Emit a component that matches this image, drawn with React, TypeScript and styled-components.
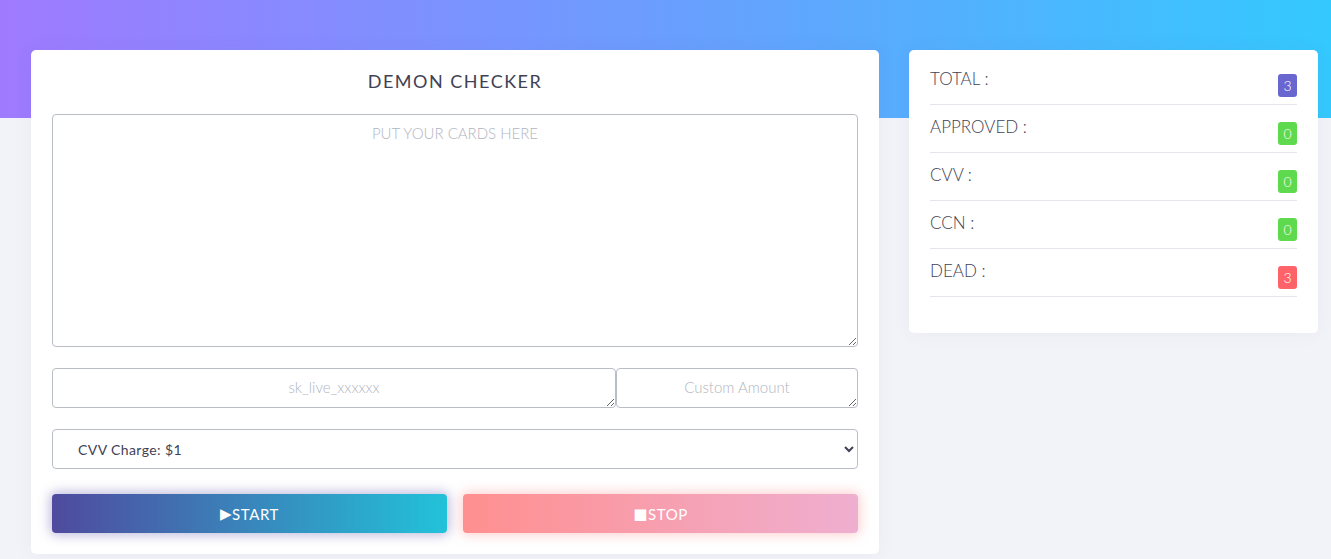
import React from "react";
import styled, { createGlobalStyle } from "styled-components";

const Global = createGlobalStyle`
  html, body { margin: 0; padding: 0; }
  body {
    font-family: "Lato", "Noto Sans", "Liberation Sans", sans-serif;
    background: #f2f3f8;
    color: #3f4254;
  }
  * { box-sizing: border-box; }
`;

const Page = styled.div`
  min-height: 559px;
  background:
    linear-gradient(to right, #9f7aff 0%, #6a9efe 50%, #34c9fe 100%) no-repeat top left / 100% 118px,
    #f2f3f8;
  padding: 50px 13px 0 31px;
`;

const Layout = styled.div`
  display: grid;
  grid-template-columns: 848px 409px;
  column-gap: 30px;
  align-items: start;
`;

const Card = styled.div`
  background: #ffffff;
  border-radius: 5px;
  box-shadow: 0 0 20px rgba(82, 63, 105, 0.05);
`;

const CheckerCard = styled(Card)`
  padding: 19px 21px 21px;
  display: flex;
  flex-direction: column;
`;

const Title = styled.h1`
  margin: 0 0 21px;
  text-align: center;
  font-size: 18px;
  line-height: 24px;
  font-weight: 400;
  letter-spacing: 1.5px;
  color: #3f4254;
`;

const Field = styled.textarea<{ $h: number }>`
  display: block;
  width: 100%;
  height: ${(p) => p.$h}px;
  border: 1px solid #b9bdc5;
  border-radius: 4px;
  font-family: inherit;
  font-size: 15px;
  color: #495057;
  text-align: center;
  padding: 9px 12px;
  outline: none;
  resize: both;
  &::placeholder { color: #b1b5bf; font-weight: 300; }
`;

const InputRow = styled.div`
  display: grid;
  grid-template-columns: 564px 242px;
  margin-top: 21px;
`;

const Select = styled.select`
  display: block;
  width: 100%;
  height: 40px;
  margin-top: 21px;
  border: 1px solid #b9bdc5;
  border-radius: 4px;
  background: #fff;
  font-family: inherit;
  font-size: 14px;
  font-weight: 400;
  letter-spacing: 0.4px;
  color: #3f4254;
  padding: 0 18px 0 21px;
  outline: none;
`;

const ButtonRow = styled.div`
  display: grid;
  grid-template-columns: 1fr 1fr;
  column-gap: 16px;
  margin-top: 25px;
`;

const ActionButton = styled.button<{ $kind: "start" | "stop" }>`
  height: 39px;
  border: none;
  border-radius: 4px;
  color: #ffffff;
  font-family: inherit;
  font-size: 15px;
  font-weight: 400;
  letter-spacing: 0.6px;
  cursor: pointer;
  display: flex;
  align-items: center;
  justify-content: center;
  background: ${(p) =>
    p.$kind === "start"
      ? "linear-gradient(to right, #4f4a9e 0%, #22c2d9 100%)"
      : "linear-gradient(to right, #ff8f8f 0%, #efafd0 100%)"};
  box-shadow: ${(p) =>
    p.$kind === "start"
      ? "0 0 12px 2px rgba(88, 80, 170, 0.4)"
      : "0 0 12px 2px rgba(255, 140, 140, 0.4)"};
`;

const Glyph = styled.span`
  font-family: "DejaVu Sans", sans-serif;
  font-size: 15px;
`;

const StatsCard = styled(Card)`
  padding: 7px 21px 36px;
`;

const StatRow = styled.div`
  height: 48px;
  display: flex;
  justify-content: space-between;
  align-items: flex-start;
  border-bottom: 1px solid #e4e6ec;
`;

const StatLabel = styled.span`
  margin-top: 12px;
  font-size: 17px;
  line-height: 20px;
  font-weight: 300;
  color: #3f4254;
`;

const Badge = styled.span<{ $color: string }>`
  margin-top: 17px;
  min-width: 19px;
  height: 23px;
  border-radius: 3px;
  background: ${(p) => p.$color};
  color: #fff;
  font-size: 14px;
  font-weight: 300;
  display: flex;
  align-items: center;
  justify-content: center;
  padding: 0 4px;
`;

const stats = [
  { label: "TOTAL :", value: 3, color: "#6a66d0" },
  { label: "APPROVED :", value: 0, color: "#5fd94d" },
  { label: "CVV :", value: 0, color: "#5fd94d" },
  { label: "CCN :", value: 0, color: "#5fd94d" },
  { label: "DEAD :", value: 3, color: "#fd6368" },
];

export default function App() {
  return (
    <>
      <Global />
      <Page>
        <Layout>
          <CheckerCard>
            <Title>DEMON CHECKER</Title>
            <Field $h={233} placeholder="PUT YOUR CARDS HERE" />
            <InputRow>
              <Field $h={40} placeholder="sk_live_xxxxxx" />
              <Field $h={40} placeholder="Custom Amount" />
            </InputRow>
            <Select defaultValue="1">
              <option value="1">CVV Charge: $1</option>
            </Select>
            <ButtonRow>
              <ActionButton $kind="start">
                <Glyph>▶</Glyph>START
              </ActionButton>
              <ActionButton $kind="stop">
                <Glyph>■</Glyph>STOP
              </ActionButton>
            </ButtonRow>
          </CheckerCard>
          <StatsCard>
            {stats.map((s) => (
              <StatRow key={s.label}>
                <StatLabel>{s.label}</StatLabel>
                <Badge $color={s.color}>{s.value}</Badge>
              </StatRow>
            ))}
          </StatsCard>
        </Layout>
      </Page>
    </>
  );
}
